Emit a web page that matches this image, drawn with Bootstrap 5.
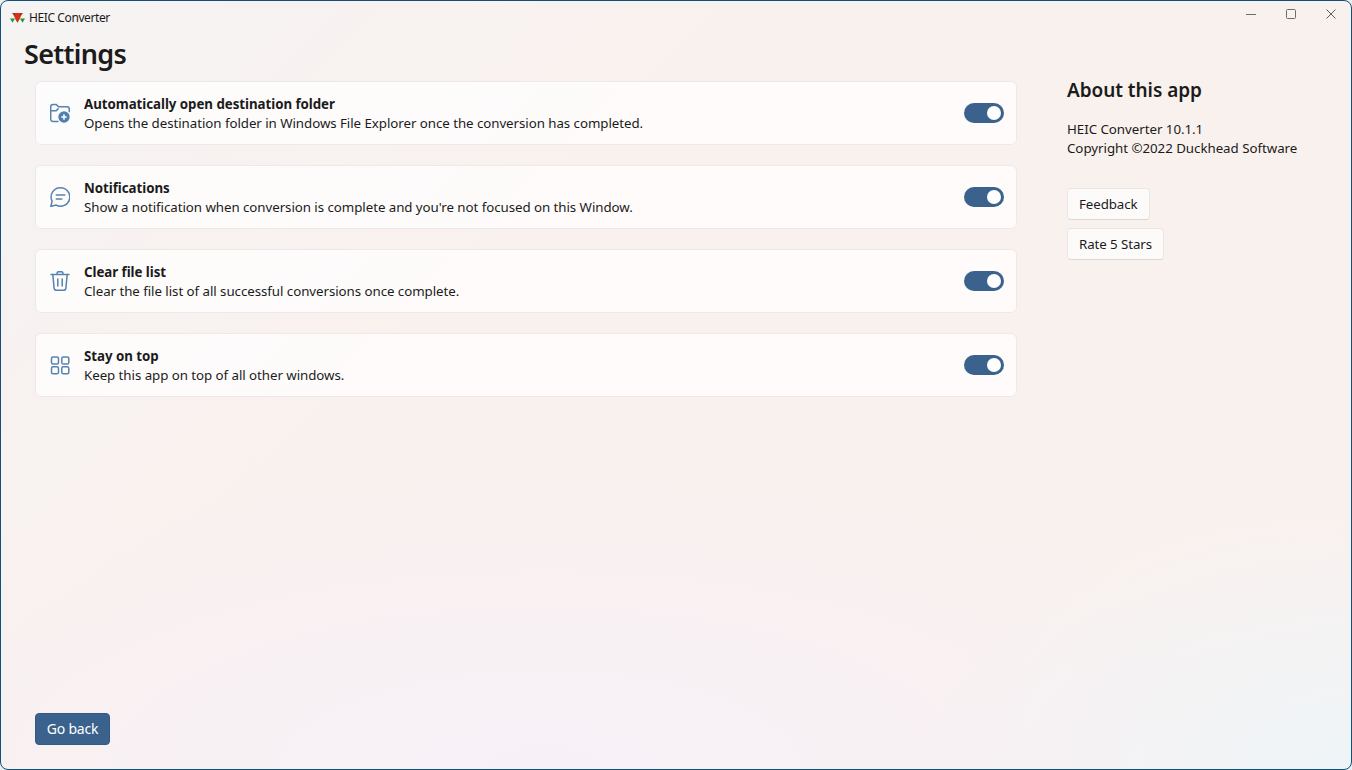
<!DOCTYPE html>
<html lang="en">
<head>
<meta charset="utf-8">
<title>HEIC Converter</title>
<link href="https://cdn.jsdelivr.net/npm/bootstrap@5.3.0/dist/css/bootstrap.min.css" rel="stylesheet">
<style>
html,body{height:100%;margin:0;background:#e9eef0;overflow:hidden}
body{font-family:"Noto Sans","Open Sans",sans-serif;color:#1b1b1b;font-size:14px}
.appwin{height:770px;width:1352px;border:1px solid #0f5278;border-radius:8px;overflow:hidden;
 background:
 radial-gradient(ellipse 420px 260px at 100% 100%,#eef4f8 0%,rgba(238,244,248,0) 100%),
 radial-gradient(ellipse 800px 300px at 40% 100%,#f7f0f7 0%,rgba(247,240,247,0) 100%),
 linear-gradient(135deg,#f5f3f3 0%,#f9f1ee 35%,#f9f1ee 100%)}
.titlebar{height:31px;padding:2px 0 0 9px;font-size:12px;letter-spacing:-.4px}
.winbtn{width:40px;height:28px;margin-top:-8px}
.pagehead{font-size:27px;font-weight:600;line-height:36px;margin:4px 0 9px 23px;letter-spacing:-.7px}
.leftcol{width:982px;margin-left:34px}
.rightcol{margin-left:50px}
.setcard{height:64px;margin-bottom:20px;background:rgba(255,255,255,.72);border:1px solid #efe8e6;border-radius:6px;padding:0 12px 0 14px}
.seticon{width:20px;height:20px;margin-right:14px;flex:none}
.settext{margin-top:2px}
.settitle{font-weight:700;font-size:13.3px;line-height:19px;letter-spacing:-.04px}
.setdesc{font-size:13.3px;line-height:19px;letter-spacing:-.05px}
.togg{width:40px;height:20px;border-radius:10px;background:#3a628d;position:relative;flex:none}
.togg::after{content:"";position:absolute;right:3px;top:3px;width:14px;height:14px;border-radius:50%;background:#fff}
.abouthead{font-size:19px;font-weight:600;line-height:26px;margin:-4px 0 17px;letter-spacing:-.05px}
.aboutline{font-size:13.3px;line-height:19px;letter-spacing:-.03px}
.ghostbtn{display:block;font-size:13.3px;line-height:18px;padding:6px 11px;height:32px;background:rgba(255,255,255,.7);border:1px solid #ebe6e3;border-bottom-color:#dcd7d5;border-radius:4px;color:#1b1b1b;letter-spacing:-.08px}
.ghostbtn:hover{background:#fff;color:#1b1b1b;border-color:#ebe6e3}
.btnstack{margin-top:30px;gap:8px}
.backbtn{width:75px;height:32px;font-size:14px;line-height:20px;padding:5px 0;background:#3a628d;border:1px solid #355a82;border-radius:4px;color:#fff;letter-spacing:-.2px}
.footbar{margin:0 0 24px 34px}
.ico{fill:none;stroke:#5582b0;stroke-width:1.5}
</style>
</head>
<body>
<div class="appwin d-flex flex-column">
  <div class="titlebar d-flex align-items-center flex-shrink-0">
    <svg width="15" height="10" viewBox="0 0 15 10" class="me-1"><path d="M0 5.500h5L2.500 9.800zM5 5.500h5L7.500 9.800zM10 5.500h5L12.500 9.800z" fill="#1f9a2c"/><path d="M2.500 0h10L9.500 6 7.500 9.500 5.500 6z" fill="#e02c16"/><path d="M2 0h2.500l1 3zM13 0h-2.500l-1 3z" fill="#7f3a28"/></svg>
    <span>HEIC Converter</span>
    <div class="ms-auto d-flex">
      <div class="winbtn d-flex align-items-center justify-content-center"><svg width="10" height="10" viewBox="0 0 10 10"><path d="M0 5.500h10" stroke="#6f6c6c" fill="none"/></svg></div>
      <div class="winbtn d-flex align-items-center justify-content-center"><svg width="10" height="10" viewBox="0 0 10 10"><rect x=".5" y=".5" width="9" height="9" rx="1" stroke="#6f6c6c" fill="none"/></svg></div>
      <div class="winbtn d-flex align-items-center justify-content-center"><svg width="10" height="10" viewBox="0 0 10 10"><path d="M.5.5l9 9M9.500.5l-9 9" stroke="#5f5c5c" fill="none"/></svg></div>
    </div>
  </div>
  <h1 class="pagehead flex-shrink-0">Settings</h1>
  <div class="d-flex flex-grow-1">
    <div class="leftcol">
      <div class="setcard d-flex align-items-center">
        <svg class="seticon ico" viewBox="0 0 20 20"><path d="M8.500 18.500H3A2.300 2.300 0 0 1 .7 16.200V3.700A2.300 2.300 0 0 1 3 1.400h3.200l2.300 2.300H17a2.300 2.300 0 0 1 2.300 2.300v3.200"/><path d="M.7 7.700h5.500l2.300-2.300"/><circle cx="14" cy="14" r="5.700" fill="#4f7fae" stroke="none"/><path d="M14 11.300v5.400M11.300 14h5.400" stroke="#fff"/></svg>
        <div class="flex-grow-1 settext"><div class="settitle">Automatically open destination folder</div><div class="setdesc">Opens the destination folder in Windows File Explorer once the conversion has completed.</div></div>
        <div class="togg"></div>
      </div>
      <div class="setcard d-flex align-items-center">
        <svg class="seticon ico" viewBox="0 0 20 20"><path d="M10.500.8a9.200 9.200 0 1 1-4.300 17.300L.9 19.300l1.200-5.100A9.200 9.200 0 0 1 10.500.8z"/><path d="M6.300 8h8.500M6.300 12h5.500" stroke-linecap="round"/></svg>
        <div class="flex-grow-1 settext"><div class="settitle">Notifications</div><div class="setdesc">Show a notification when conversion is complete and you're not focused on this Window.</div></div>
        <div class="togg"></div>
      </div>
      <div class="setcard d-flex align-items-center">
        <svg class="seticon ico" viewBox="0 0 20 20"><path d="M1 3.500h18M7 3.500V2.500A1.800 1.800 0 0 1 8.800.7h2.400A1.800 1.800 0 0 1 13 2.500v1M2.800 3.500l1.300 13.600a2.300 2.300 0 0 0 2.300 2.200h7.200a2.300 2.300 0 0 0 2.300-2.200l1.300-13.600M7.800 8v7M12.200 8v7" stroke-linecap="round"/></svg>
        <div class="flex-grow-1 settext"><div class="settitle">Clear file list</div><div class="setdesc">Clear the file list of all successful conversions once complete.</div></div>
        <div class="togg"></div>
      </div>
      <div class="setcard d-flex align-items-center">
        <svg class="seticon ico" viewBox="0 0 20 20"><rect x="1.500" y="2" width="7" height="7" rx="1.600"/><rect x="11.800" y="2" width="7" height="7" rx="1.600"/><rect x="1.500" y="11.800" width="7" height="7" rx="1.600"/><rect x="11.800" y="11.800" width="7" height="7" rx="1.600"/></svg>
        <div class="flex-grow-1 settext"><div class="settitle">Stay on top</div><div class="setdesc">Keep this app on top of all other windows.</div></div>
        <div class="togg"></div>
      </div>
    </div>
    <div class="rightcol">
      <h2 class="abouthead">About this app</h2>
      <div class="aboutline">HEIC Converter 10.1.1</div>
      <div class="aboutline">Copyright ©2022 Duckhead Software</div>
      <div class="btnstack d-flex flex-column align-items-start">
        <a class="btn ghostbtn" href="#">Feedback</a>
        <a class="btn ghostbtn" href="#">Rate 5 Stars</a>
      </div>
    </div>
  </div>
  <div class="footbar flex-shrink-0"><button class="btn backbtn" type="button">Go back</button></div>
</div>
<script src="https://cdn.jsdelivr.net/npm/bootstrap@5.3.0/dist/js/bootstrap.bundle.min.js"></script>
</body>
</html>
